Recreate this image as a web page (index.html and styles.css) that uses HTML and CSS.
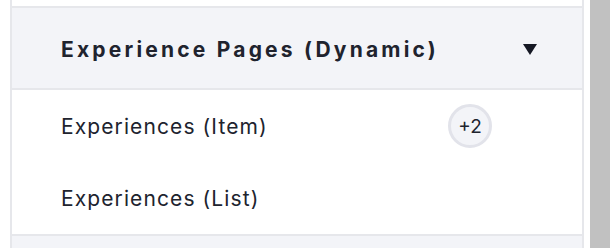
FILE: index.html
```html
<!DOCTYPE html>
<html lang="en">
<head>
    <meta charset="UTF-8">
    <title>Pages</title>
    <link rel="stylesheet" href="styles.css">
</head>
<body>
    <div class="layout">
        <div class="panel">
            <div class="prev"></div>
            <div class="group-header">
                <span>Experience Pages (Dynamic)</span>
                <svg class="caret" width="14" height="11" viewBox="0 0 14 11"><path d="M0 0H14L7 11Z" fill="#151824"/></svg>
            </div>
            <div class="page-list">
                <div class="page-row">
                    <span class="page-name">Experiences (Item)</span>
                    <span class="badge">+2</span>
                </div>
                <div class="page-row">
                    <span class="page-name">Experiences (List)</span>
                </div>
            </div>
            <div class="group-header next"></div>
        </div>
        <div class="scrollbar"></div>
    </div>
</body>
</html>
```

FILE: styles.css
```css
body {
    margin: 0;
    background: #fff;
    font-family: Inter, "Noto Sans", sans-serif;
    color: #20232e;
    height: 248px;
    overflow: hidden;
}

.layout {
    display: flex;
    height: 248px;
}

.panel {
    margin-left: 10px;
    width: 570px;
    border-left: 2px solid #e6e7eb;
    border-right: 2px solid #e6e7eb;
    display: flex;
    flex-direction: column;
}

.prev {
    height: 6px;
    flex-shrink: 0;
}

.group-header {
    background: #f3f4f8;
    border-top: 2px solid #e6e7eb;
    border-bottom: 2px solid #e6e7eb;
    height: 78px;
    flex-shrink: 0;
    display: flex;
    align-items: center;
    justify-content: space-between;
    padding: 2px 45px 0 49px;
    font-weight: 700;
    font-size: 21px;
    letter-spacing: 3.2px;
}

.group-header.next {
    border-bottom: none;
    flex: 1;
}

.page-list {
    display: flex;
    flex-direction: column;
    flex-shrink: 0;
}

.page-row {
    height: 72px;
    display: flex;
    align-items: center;
    padding-left: 49px;
    font-size: 21px;
    letter-spacing: 1.1px;
}

.page-name {
    width: 387px;
}

.badge {
    width: 38px;
    height: 38px;
    border: 3px solid #e2e3ea;
    background: #f3f4f8;
    border-radius: 50%;
    display: flex;
    align-items: center;
    justify-content: center;
    font-size: 19px;
    letter-spacing: 0;
}

.scrollbar {
    margin-left: 6px;
    width: 20px;
    background: #c1c1c1;
}
```
